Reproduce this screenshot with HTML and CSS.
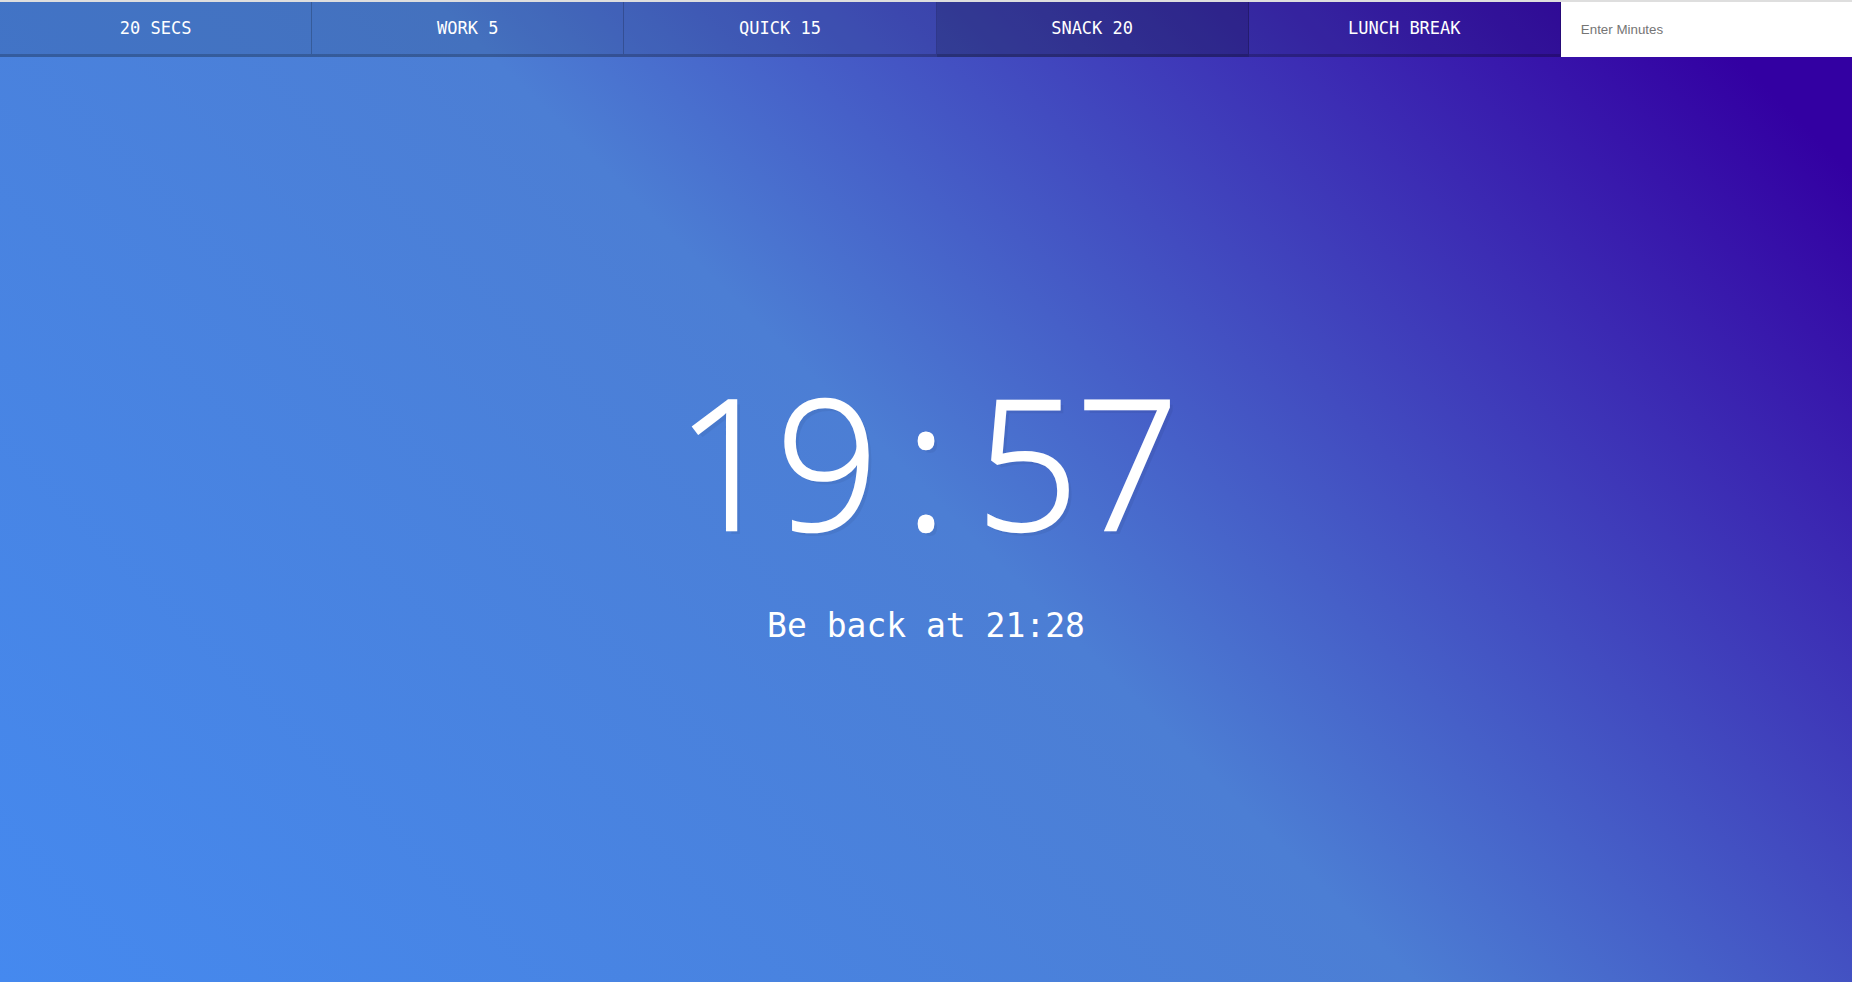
FILE: index.html
```html
<!DOCTYPE html>
<html lang="en">
<head>
<meta charset="UTF-8">
<title>Countdown Timer</title>
<link rel="stylesheet" href="styles.css">
</head>
<body>
<div class="timer">
  <div class="timer__controls">
    <button class="timer__button">20 Secs</button>
    <button class="timer__button">Work 5</button>
    <button class="timer__button">Quick 15</button>
    <button class="timer__button timer__button--active">Snack 20</button>
    <button class="timer__button">Lunch Break</button>
    <form class="timer__form" name="customForm">
      <input class="timer__input" type="text" name="minutes" placeholder="Enter Minutes">
    </form>
  </div>
  <div class="display">
    <h1 class="display__time-left"><span class="cell">1</span><span class="cell">9</span><span class="cell">:</span><span class="cell">5</span><span class="cell">7</span></h1>
    <p class="display__end-time">Be back at 21:28</p>
  </div>
</div>
</body>
</html>
```
FILE: styles.css
```css
* {
  box-sizing: border-box;
}

html,
body {
  margin: 0;
  padding: 0;
}

body {
  font-family: "DejaVu Sans Mono", monospace;
}

.timer {
  display: flex;
  flex-direction: column;
  min-height: 100vh;
  border-top: 2px solid #dedede;
  background: linear-gradient(45deg, #4589ef 0%, #4c7ed4 50%, #3300a2 94%, #3300a2 100%);
}

.timer__controls {
  display: flex;
}

.timer__button {
  flex: 1 1 0;
  margin: 0;
  padding: 10px;
  border: 0;
  border-right: 1px solid rgba(0, 0, 0, 0.2);
  border-bottom: 3px solid rgba(0, 0, 0, 0.2);
  background: rgba(0, 0, 0, 0.1);
  color: #fff;
  font-family: "DejaVu Sans Mono", monospace;
  font-size: 17px;
  line-height: 32px;
  text-transform: uppercase;
  cursor: pointer;
}

.timer__button--active {
  background: rgba(0, 0, 0, 0.23);
}

.timer__form {
  flex: 1 1 0;
  display: flex;
  margin: 0;
}

.timer__input {
  flex: 1;
  min-width: 0;
  border: 0;
  padding: 20px;
  background: #fff;
  font-family: "Liberation Sans", Arial, sans-serif;
  font-size: 13.333px;
  color: #222;
}

.timer__input::placeholder {
  color: #757575;
}

.display {
  flex: 1;
  display: flex;
  flex-direction: column;
  align-items: center;
  justify-content: center;
}

.display__time-left {
  margin: 0;
  display: flex;
  font-family: "Open Sans", sans-serif;
  font-weight: 300;
  font-size: 180px;
  line-height: 182px;
  color: #fff;
  -webkit-text-stroke: 2.5px #fff;
  text-shadow: 4px 4px 0 rgba(0, 0, 0, 0.05);
}

.cell {
  display: inline-block;
  width: 100px;
  text-align: center;
}

.display__end-time {
  margin: 54px 0 24px;
  font-family: "DejaVu Sans Mono", monospace;
  font-size: 33px;
  line-height: 40px;
  color: #fff;
}
```
